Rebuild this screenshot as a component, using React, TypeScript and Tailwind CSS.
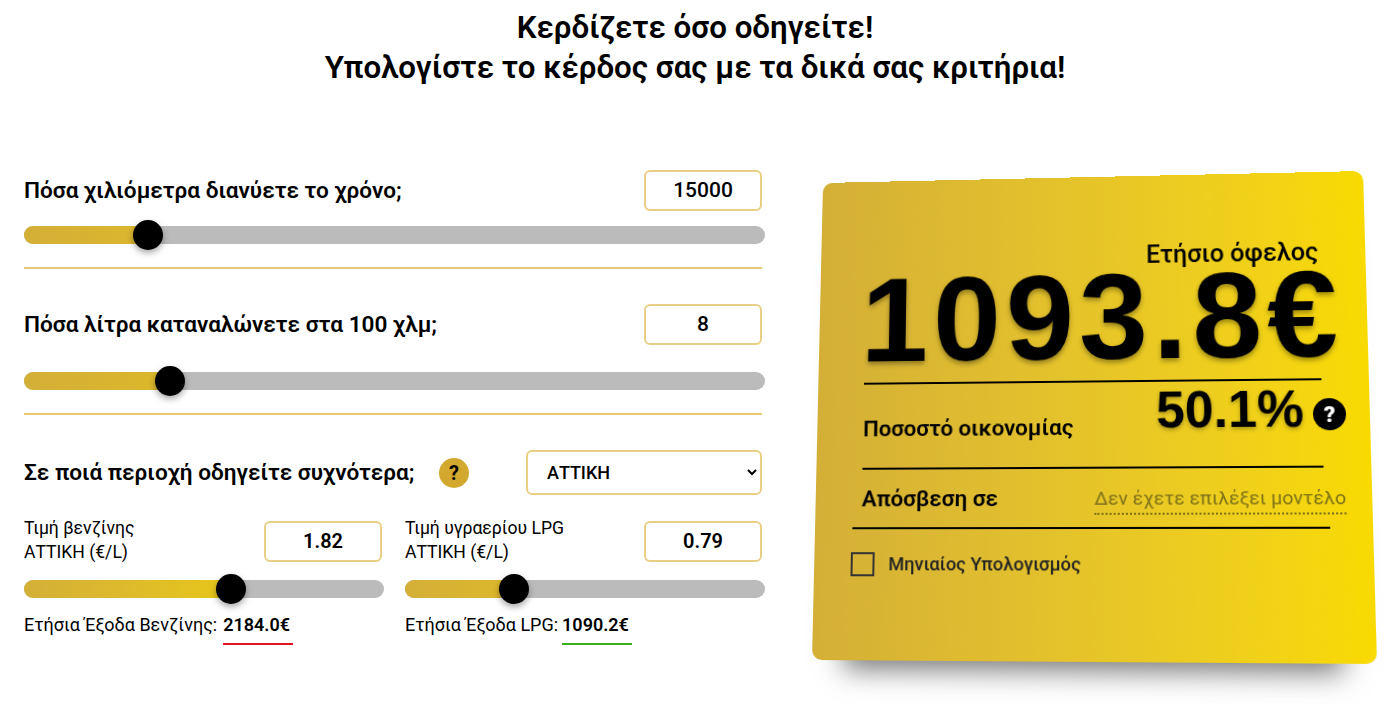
function Slider({ width, fill, thumb, gradient }: { width: string; fill: string; thumb: string; gradient: string }) {
  return (
    <div className={`relative h-[18px] rounded-full bg-[#bbbbbb] ${width}`}>
      <div className={`h-full rounded-full bg-gradient-to-r ${gradient} ${fill}`} />
      <div className={`absolute top-[-6px] size-[30px] rounded-full bg-black shadow-[0_3px_6px_rgba(0,0,0,0.35)] ${thumb}`} />
    </div>
  );
}

function NumberBox({ value, bold }: { value: string; bold?: boolean }) {
  return (
    <input
      readOnly
      value={value}
      className={`h-[41px] w-[118px] rounded-[6px] border-2 border-[#e8cf85] bg-white text-center text-black outline-none ${
        bold ? "text-[20px] font-semibold" : "pb-[2px] text-[21px] font-medium"
      }`}
    />
  );
}

function Divider() {
  return <div className="h-[2px] w-[738px] bg-[#e8ca75]" />;
}

export default function App() {
  return (
    <div className="h-[705px] w-[1390px] overflow-hidden bg-white font-[Roboto,sans-serif] text-black">
      <h1 className="pt-[8px] text-center text-[31.3px] leading-[40px] font-semibold">
        Κερδίζετε όσο οδηγείτε!
        <br />
        Υπολογίστε το κέρδος σας με τα δικά σας κριτήρια!
      </h1>

      <div className="mt-[82px] flex items-start pl-6">
        {/* Left column */}
        <div className="w-[738px]">
          <div className="flex h-[41px] items-center justify-between">
            <span className="text-[22.6px] font-semibold">Πόσα χιλιόμετρα διανύετε το χρόνο;</span>
            <NumberBox value="15000" />
          </div>
          <div className="mt-[15px]">
            <Slider width="w-[741px]" fill="w-[130px]" thumb="left-[109px]" gradient="from-[#d4af37] to-[#dcb72c]" />
          </div>
          <div className="mt-[23px]">
            <Divider />
          </div>

          <div className="mt-[35px] flex h-[41px] items-center justify-between">
            <span className="text-[22.6px] font-semibold">Πόσα λίτρα καταναλώνετε στα 100 χλμ;</span>
            <NumberBox value="8" />
          </div>
          <div className="mt-[27px]">
            <Slider width="w-[741px]" fill="w-[150px]" thumb="left-[131px]" gradient="from-[#d4af37] to-[#dcb82a]" />
          </div>
          <div className="mt-[23px]">
            <Divider />
          </div>

          <div className="mt-[35px] flex h-[45px] items-center">
            <span className="text-[22.6px] font-semibold">Σε ποιά περιοχή οδηγείτε συχνότερα;</span>
            <div className="ml-auto mr-[57px] flex size-[30px] items-center justify-center rounded-full bg-[#d2a92e] text-[20px] font-bold">?</div>
            <select className="h-[45px] w-[236px] rounded-[6px] border-2 border-[#e8cf85] bg-white pl-[15px] text-[18px] font-medium">
              <option>ΑΤΤΙΚΗ</option>
            </select>
          </div>

          <div className="mt-[25px] flex gap-[21px]">
            <div className="w-[360px]">
              <div className="flex h-[42px] items-center justify-between pr-[2px]">
                <span className="pb-[2px] text-[17.6px] leading-[24px]">
                  Τιμή βενζίνης
                  <br />
                  ΑΤΤΙΚΗ (€/L)
                </span>
                <NumberBox value="1.82" bold />
              </div>
              <div className="mt-[18px]">
                <Slider width="w-[360px]" fill="w-[220px]" thumb="left-[192px]" gradient="from-[#d4af37] to-[#e8c812]" />
              </div>
              <div className="mt-[16px] flex h-[20px] items-center text-[18px]">
                <span>Ετήσια Έξοδα Βενζίνης:</span>
                <span className="ml-[6px] font-semibold">2184.0€</span>
              </div>
              <div className="ml-[199px] mt-[9px] h-[2px] w-[70px] bg-[#e0141c]" />
            </div>
            <div className="w-[360px]">
              <div className="flex h-[42px] items-center justify-between pr-[3px]">
                <span className="pb-[2px] text-[17.6px] leading-[24px]">
                  Τιμή υγραερίου LPG
                  <br />
                  ΑΤΤΙΚΗ (€/L)
                </span>
                <NumberBox value="0.79" bold />
              </div>
              <div className="mt-[18px]">
                <Slider width="w-[360px]" fill="w-[120px]" thumb="left-[94px]" gradient="from-[#d4af37] to-[#ddb92a]" />
              </div>
              <div className="mt-[16px] flex h-[20px] items-center text-[18px]">
                <span>Ετήσια Έξοδα LPG:</span>
                <span className="ml-[4px] font-semibold">1090.2€</span>
              </div>
              <div className="ml-[157px] mt-[9px] h-[2px] w-[70px] bg-[#3cb01c]" />
            </div>
          </div>
        </div>

        {/* Result card, tilted */}
        <div className="ml-[53px] mt-[2px] h-[490px] w-[550px] shrink-0 origin-top-left rounded-[10px] bg-gradient-to-r from-[#d4af37] to-[#f8da00] pl-[47px] pr-[46px] pt-[69px] shadow-[0_40px_26px_-32px_rgba(0,0,0,0.55)] will-change-transform [transform:matrix3d(0.94983,-0.02176,0,-0.00005837,-0.022183,0.93019,0,-0.00008868,0,0,1,0,8,11,0,1)]">
          <div className="text-right text-[25px] leading-[28px] font-medium">Ετήσιο όφελος</div>
          <div className="-ml-[4px] mt-[-10px] h-[124px] whitespace-nowrap font-['Liberation_Sans',sans-serif] text-[124px] leading-[118px] font-bold tracking-[5px] [text-shadow:0_3px_5px_rgba(0,0,0,0.35)]">
            1093.8€
          </div>
          <div className="h-[2px] bg-black" />
          <div className="flex h-[85px]">
            <span className="mt-[29px] text-[22.5px] font-semibold">Ποσοστό οικονομίας</span>
            <div className="ml-auto mr-[-23px] mt-[1px] flex items-start">
              <span className="font-['Liberation_Sans',sans-serif] text-[51px] leading-[56px] font-bold [text-shadow:0_2px_4px_rgba(0,0,0,0.3)]">50.1%</span>
              <div className="ml-[9px] mt-[17px] flex size-[32px] items-center justify-center rounded-full bg-black text-[22px] font-black text-white">?</div>
            </div>
          </div>
          <div className="h-[2px] bg-black" />
          <div className="flex h-[58px] items-center justify-between">
            <span className="pt-[2px] text-[22.5px] font-semibold">Απόσβεση σε</span>
            <span className="mr-[-21px] mt-[4px] border-b-2 border-dotted border-[#7d7018] text-[19px] leading-[28px] text-[#7d7018]">
              Δεν έχετε επιλέξει μοντέλο
            </span>
          </div>
          <div className="-ml-[9px] -mr-[5px] h-[2px] bg-black" />
          <div className="-ml-[10px] mt-[21px] flex items-center gap-[14px]">
            <div className="size-[24px] border-2 border-[#333333]" />
            <span className="text-[18.3px] font-medium text-[#222222]">Μηνιαίος Υπολογισμός</span>
          </div>
        </div>
      </div>
    </div>
  );
}
